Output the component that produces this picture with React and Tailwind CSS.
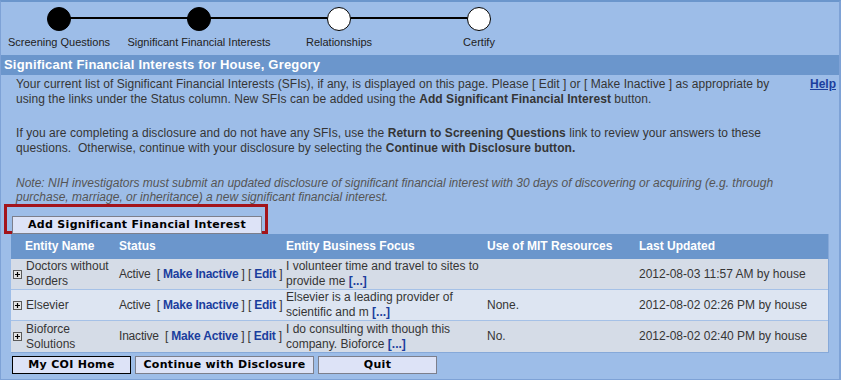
import React from "react";

const steps = [
  { label: "Screening Questions", done: true },
  { label: "Significant Financial Interests", done: true },
  { label: "Relationships", done: false },
  { label: "Certify", done: false },
];

const rows = [
  {
    name: ["Doctors without", "Borders"],
    status: "Active",
    action: "Make Inactive",
    focus: ["I volunteer time and travel to sites to", "provide me"],
    use: "",
    updated: "2012-08-03 11:57 AM by house",
    bg: "bg-[#d5dce7]",
  },
  {
    name: ["Elsevier"],
    status: "Active",
    action: "Make Inactive",
    focus: ["Elsevier is a leading provider of", "scientific and m"],
    use: "None.",
    updated: "2012-08-02 02:26 PM by house",
    bg: "bg-[#dde5f2]",
  },
  {
    name: ["Bioforce", "Solutions"],
    status: "Inactive",
    action: "Make Active",
    focus: ["I do consulting with though this", "company. Bioforce"],
    use: "No.",
    updated: "2012-08-02 02:40 PM by house",
    bg: "bg-[#d5dce7]",
  },
];

const cols = "grid grid-cols-[104px_167px_201px_152px_193px]";
const link = "font-bold text-[#1b3e9e]";

function PlusBox() {
  return (
    <svg width="9" height="9" viewBox="0 0 9 9" className="shrink-0">
      <rect x="0.5" y="0.5" width="8" height="8" fill="#e4e4e4" stroke="#5a5a5a" />
      <path d="M2 4.5h5M4.5 2v5" stroke="#000" strokeWidth="1.2" />
    </svg>
  );
}

function Btn({ children, w, dark }) {
  return (
    <button
      className={`${w} h-[18px] bg-[#dde3f7] border ${
        dark ? "border-black" : "border-[#7c7f8c]"
      } font-['DejaVu_Sans'] font-bold text-[11px] leading-[16px] text-black tracking-[0.3px]`}
    >
      {children}
    </button>
  );
}

export default function App() {
  return (
    <div className="w-[841px] h-[380px] overflow-hidden bg-[#9dbde8] border-t-2 border-t-[#6b96cc] border-l border-b border-r-2 border-[#7ea2d6] font-['Liberation_Sans',Arial,sans-serif] text-[#353535]">
      {/* progress steps */}
      <div className="relative h-[53px]">
        <div className="absolute left-[58px] top-[15px] w-[419px] h-[2px] bg-black" />
        <div className="relative flex ml-[-12px] pt-[5px]">
          {steps.map((s) => (
            <div key={s.label} className="w-[140px] flex flex-col items-center">
              <div
                className={`w-[24px] h-[24px] rounded-full border border-black ${
                  s.done ? "bg-black" : "bg-white"
                }`}
              />
              <div className="mt-[5px] text-[11px] leading-[13px] whitespace-nowrap text-[#222]">
                {s.label}
              </div>
            </div>
          ))}
        </div>
      </div>

      <div className="h-[20px] bg-[#6b96cc] pl-[3px] text-white font-bold text-[13px] leading-[20px] tracking-[0.2px]">
        Significant Financial Interests for House, Gregory
      </div>

      <div className="flex justify-between pl-[15px] pr-[3px] pt-[2px] text-[12px] leading-[15px] whitespace-nowrap">
        <div>
          <p className="tracking-[0.05px]">
            Your current list of Significant Financial Interests (SFIs), if any, is displayed on this page. Please [ Edit ] or [ Make Inactive ] as appropriate by
            <br />
            using the links under the Status column. New SFIs can be added using the <b>Add Significant Financial Interest</b> button.
          </p>
          <p className="mt-[19px] tracking-[0.05px]">
            If you are completing a disclosure and do not have any SFIs, use the <b>Return to Screening Questions</b> link to review your answers to these
            <br />
            questions.&nbsp; Otherwise, continue with your disclosure by selecting the <b>Continue with Disclosure button.</b>
          </p>
          <p className="mt-[20px] leading-[14px] italic text-[#555]">
            Note: NIH investigators must submit an updated disclosure of significant financial interest with 30 days of discovering or acquiring (e.g. through
            <br />
            purchase, marriage, or inheritance) a new significant financial interest.
          </p>
        </div>
        <a className="font-bold text-[#1b3e9e] underline">Help</a>
      </div>

      <div className="ml-[3px] w-[264px] h-[30px] border-[3px] border-[#a3141b] pl-[5px] pt-[4px]">
        <Btn w="w-[250px]">Add Significant Financial Interest</Btn>
      </div>

      {/* table */}
      <div className="ml-[10px] w-[818px] border-r border-b border-[#86a9d9] text-[12px] leading-[15px]">
        <div className={`${cols} h-[25px] items-center bg-[#6b96cc] text-white font-bold`}>
          <div className="pl-[14px]">Entity Name</div>
          <div className="pl-[4px]">Status</div>
          <div className="pl-[4px]">Entity Business Focus</div>
          <div className="pl-[4px]">Use of MIT Resources</div>
          <div className="pl-[4px]">Last Updated</div>
        </div>
        {rows.map((r, i) => (
          <div
            key={i}
            className={`${cols} h-[31px] items-center ${r.bg} ${
              i < 2 ? "border-b border-[#a5c1e7]" : ""
            }`}
          >
            <div className="flex items-center pl-[2px] gap-[4px]">
              <PlusBox />
              <div>
                {r.name.map((n) => (
                  <div key={n}>{n}</div>
                ))}
              </div>
            </div>
            <div className="pl-[4px] whitespace-nowrap tracking-[-0.2px]">
              {r.status}&nbsp;&nbsp;[ <span className={link}>{r.action}</span> ] [ <span className={link}>Edit</span> ]
            </div>
            <div className="pl-[4px] whitespace-nowrap">
              <div>{r.focus[0]}</div>
              <div>
                {r.focus[1]} <span className={link}>[...]</span>
              </div>
            </div>
            <div className="pl-[4px]">{r.use}</div>
            <div className="pl-[4px] whitespace-nowrap">{r.updated}</div>
          </div>
        ))}
      </div>

      <div className="flex mt-[3px] ml-[11px] gap-[4px]">
        <Btn w="w-[119px]" dark>My COI Home</Btn>
        <Btn w="w-[179px]">Continue with Disclosure</Btn>
        <Btn w="w-[119px]">Quit</Btn>
      </div>
    </div>
  );
}
